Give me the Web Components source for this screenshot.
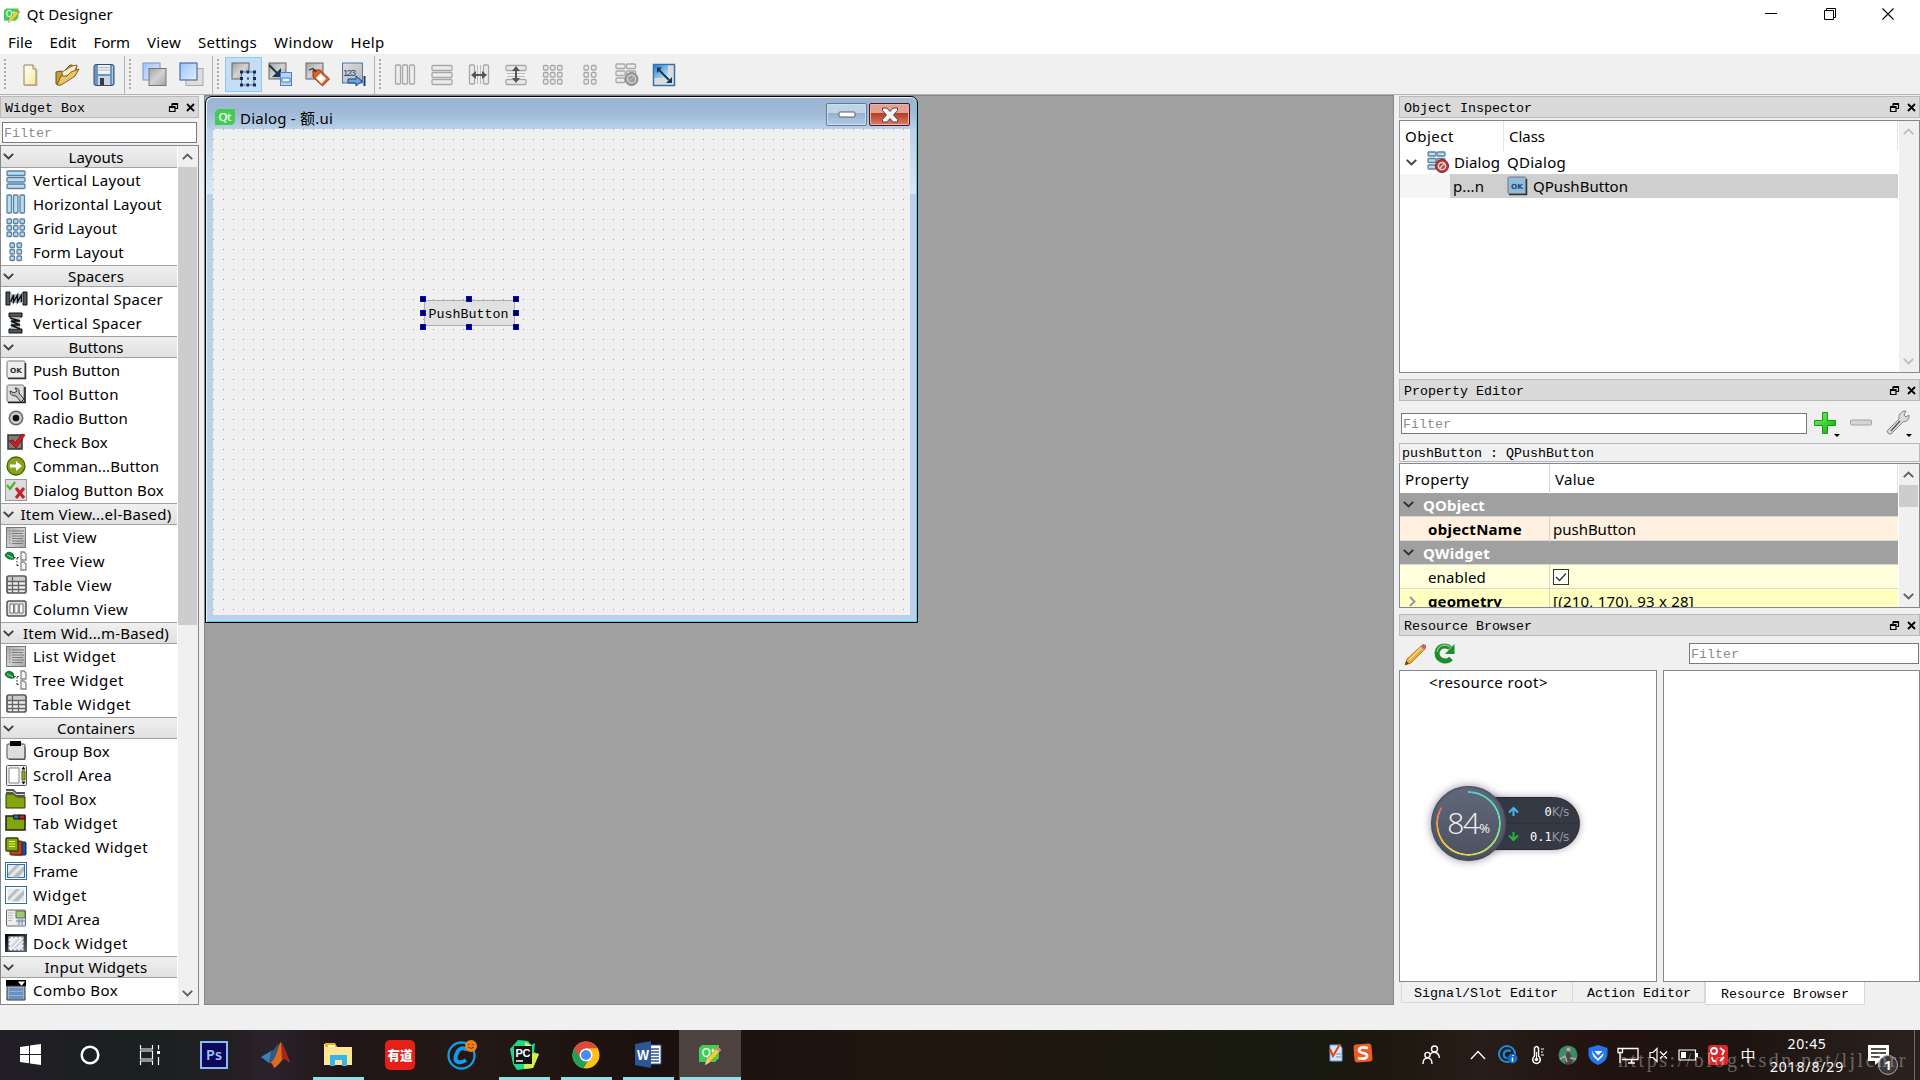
<!DOCTYPE html>
<html lang="en">
<head>
<meta charset="utf-8">
<title>Qt Designer</title>
<style>
  html, body { margin: 0; width: 1920px; height: 1080px; overflow: hidden; }
  body {
    font: 15px/20px "Noto Sans", "Noto Sans CJK SC", sans-serif;
    color: #000;
    background: #f0f0f0;
    --mono: 13.33px/20px "Liberation Mono", "Noto Sans CJK SC", monospace;
  }
</style>
</head>
<body>
<designer-app></designer-app>

<script>
const OK = (fill, ink) => `<rect x="1" y="1" width="18" height="17" rx="1.5" fill="${fill}" stroke="#777"/><path d="M2 18.5h17.5V3" fill="none" stroke="#333" stroke-width="1.5"/><text x="4" y="12.5" font-family="DejaVu Sans" font-size="7" font-weight="bold" fill="${ink}" textLength="12" lengthAdjust="spacingAndGlyphs">OK</text>`;
const cells = (xs, ys, w, h, fill, stroke) => xs.map(x => ys.map(y =>
  `<rect x="${x}" y="${y}" width="${w}" height="${h}" rx="1" fill="${fill}" stroke="${stroke}" stroke-width="1.3"/>`).join('')).join('');
const BLUE = ['#b5ddf3', '#5f7f9f'];
const GREY = ['#ececec', '#a8a8a8'];
const METAL = '<linearGradient id="m" x2="1" y2="1"><stop stop-color="#a2a2a2"/><stop offset=".5" stop-color="#d2d2d2"/><stop offset="1" stop-color="#a2a2a2"/></linearGradient>';
const SKY = '<linearGradient id="s" y2="1"><stop stop-color="#9dc2fa"/><stop offset="1" stop-color="#e3eefd"/></linearGradient>';
const STRIPES = (inner) => `<rect x=".5" y="1.5" width="21" height="17" fill="#fff" stroke="#2f6fb8"/><rect x="2.5" y="3.5" width="17" height="13" fill="#e8eaea" ${inner}/><path d="M3 12l8-8h4L3 16zM7 16.5L19 5v5l-6 6.500z" fill="#b9bcbe"/>`;
const listIcon = '<rect width="20" height="21" fill="url(#m)"/><rect x=".5" y=".5" width="19" height="20" fill="none" stroke="#777"/><path d="M3 4h1.500M3 7h1.500M3 10h1.500M3 13h1.500M3 16h1.500M6 4h12M6 6.500h11M6 9h12M6 11.500h11M6 14h12M6 16.500h11" stroke="#777"/>';
const treeIcon = '<path d="M0 4q3-5 8-1l1 5q-7 1-9-4z" fill="#178a35" stroke="#063"/><path d="M2 4l6 3" stroke="#9d9"/><path d="M9 6.500h6M12 7v9M12 14.500h3" stroke="#222" stroke-dasharray="1.500 1.500"/><path d="M16 1h3l2 2v6h-5zM16 11h3l2 2v6h-5z" fill="#f5f5f5" stroke="#888" stroke-width="1.300"/>';
const tableIcon = '<rect x="1" y="1" width="19" height="17" rx="2" fill="#eee" stroke="#555" stroke-width="1.700"/><path d="M2 3h17M2 5h17" stroke="#aaa"/><path d="M6.500 2v16M12.500 6v12M2 6.500h17M2 10.500h17M2 14.500h17" stroke="#666" stroke-width="1.300"/>';
const forbid = (c, d) => `<circle cx="15" cy="15" r="6.500" fill="${c}" stroke="${d}"/><circle cx="15" cy="15" r="3.600" fill="none" stroke="#ddd" stroke-width="1.500"/><path d="M12.500 17.500l5-5" stroke="#ddd" stroke-width="1.500"/>`;
const qtPencil = '<path d="M3 2h17v13l-4 4H0V5z" fill="#41cd52"/><text x="2.500" y="14" font-family="Noto Sans" font-size="13" font-weight="500" fill="#fff" textLength="14" lengthAdjust="spacingAndGlyphs">Qt</text><path d="M19 4l3 3L11 19l-5 3 2-6z" fill="#f6cf2c" stroke="#b08320" stroke-width=".6"/><path d="M19 4l3 3-2 2-3-3z" fill="#b78a85"/><path d="M8 16l3 3-5 3z" fill="#e8cfa5"/>';

// name: [width, height, markup]
const ICONS = {
  app: [22, 23, qtPencil],
  new: [22, 24, '<defs><linearGradient id="g" x2="1" y2="1"><stop stop-color="#fff"/><stop offset="1" stop-color="#f6ea93"/></linearGradient></defs><path d="M5 2h9l3 4v16H5z" fill="url(#g)" stroke="#8d8458"/><path d="M14 2v4h3" fill="#fff" stroke="#8d8458"/><path d="M18 7v15.500H6" fill="none" stroke="#999" opacity=".6"/>'],
  open: [26, 24, '<path d="M2 9l5-1 2 1 7-7 7 1-1 4L6 22l-4-1z" fill="#c79a35" stroke="#6f541a"/><path d="M8 9l10-6 5-1-2 6-12 7z" fill="#f8edc8" stroke="#8d6d25"/><path d="M3 22l4-9 6 0 4-4 8-3-4 7-9 6-5 3z" fill="#ecc465" stroke="#7f5e1d"/>'],
  save: [22, 24, '<rect x="1" y="1.500" width="20" height="21" rx="2" fill="#6f95bd" stroke="#36506f"/><rect x="5" y="2" width="12" height="9" fill="#eef1f3"/><path d="M5.500 4.500h11M5.500 7h11" stroke="#aeb9c3"/><path d="M5 13h12v9H5z" fill="#cfd5da"/><rect x="7" y="15" width="4" height="7" fill="#2b3f56"/><path d="M19.500 3v18" stroke="#a9cbe8"/>'],
  back: [26, 25, `<defs>${METAL}${SKY}</defs><rect x="1" y="1" width="17" height="17" fill="url(#s)" stroke="#7f93b5"/><rect x="7" y="6.500" width="17" height="17" fill="url(#m)" stroke="#777"/>`],
  front: [26, 25, `<defs>${METAL}${SKY}</defs><rect x="7" y="6.500" width="17" height="17" fill="#ddd" stroke="#aaa"/><rect x="1" y="1" width="17" height="17" fill="url(#s)" stroke="#2e5b9d"/>`],
  widgets: [26, 25, `<defs>${METAL}${SKY}</defs><rect x="2" y="1" width="17" height="16" fill="url(#m)" stroke="#666"/><rect x="11.500" y="10" width="12.500" height="13" fill="#c5dcfb" stroke="#3c72b7"/><path d="M10 8.500h3v3h-3zM16.500 8.500h2.500v3h-2.500zM23 8.500h3v3h-3zM10 15h3v3h-3zM23 15h3v3h-3zM10 21.500h3v3h-3zM16.500 21.500h2.500v3h-2.500zM23 21.500h3v3h-3z" fill="#1e2c4d"/><path d="M17 15.500h2v2h-2z" fill="#246"/>`],
  signals: [26, 25, `<defs>${METAL}</defs><rect x="2" y="1" width="17" height="16" fill="url(#m)" stroke="#666"/><path d="M2 3l8 8" stroke="#1c3450" stroke-width="2"/><path d="M14 6v9H5z" fill="#1c3450"/><rect x="13.500" y="10.500" width="11" height="13" fill="#b6d3fa" stroke="#4d81c0"/><path d="M15 16h8v4h-8z" fill="#e8f2ff" stroke="#4d81c0"/>`],
  buddies: [26, 25, `<defs>${METAL}</defs><rect x="2" y="1" width="17" height="16" fill="url(#m)" stroke="#666"/><path d="M9 8h7l9.500 9-7 7L9 15z" fill="#d9632c" stroke="#8d3512"/><path d="M16.500 11.500l5.500 5-4.500 5-5.500-5.500z" fill="#fff" stroke="#f2b08c"/><path d="M5 8l4-1.500 3 3.500" fill="none" stroke="#333" stroke-width="1.300"/>`],
  order: [26, 25, '<defs><linearGradient id="g" y2="1"><stop stop-color="#ddd"/><stop offset="1" stop-color="#b5b5b5"/></linearGradient></defs><rect x="1.500" y="1" width="20" height="20" fill="url(#g)" stroke="#4c79ac"/><text x="2" y="14" font-family="Liberation Sans" font-size="9.500" fill="#154477" textLength="13">123</text><path d="M7 17h8v-3l6 5-6 5v-3H7z" fill="#6aa5df" stroke="#154477"/><path d="M23.500 14v10" stroke="#154477" stroke-width="2"/>'],
  hlay: [22, 22, cells([1.5, 8.5, 15.5], [1], 5, 19, ...GREY)],
  vlay: [22, 22, cells([1], [1.5, 8.5, 15.5], 20, 5, ...GREY)],
  hsplit: [22, 22, cells([1.5, 15.5], [1], 5, 19, ...GREY) + '<path d="M9.500 1v19M12.500 1v19" stroke="#bbb"/><path d="M3 11l5-4v3h6V7l5 4-5 4v-3H8v3z" fill="#555"/>'],
  vsplit: [22, 22, cells([1], [1.5, 15.5], 20, 5, ...GREY) + '<path d="M2 9.500h18M2 12.500h18" stroke="#bbb"/><path d="M11 2l4 5h-3v7h3l-4 5-4-5h3V7H7z" fill="#555"/>'],
  grid: [22, 22, cells([1.5, 8.5, 15.5], [1.5, 8.5, 15.5], 4.500, 4.500, ...GREY)],
  form: [22, 22, cells([5, 12.5], [1.5, 8.5, 15.5], 4.500, 4.500, ...GREY)],
  unlay: [24, 24, cells([1, 11.5], [1, 8, 15], 9, 4.500, ...GREY) + '<circle cx="16.500" cy="16" r="6.500" fill="#999" stroke="#888"/><circle cx="16.500" cy="16" r="4" fill="none" stroke="#ccc" stroke-width="1.500"/><path d="M14 18.500l5-5" stroke="#ccc"/>'],
  adjust: [24, 24, '<defs><linearGradient id="a" x2="1" y2="1"><stop stop-color="#2f78c8"/><stop offset="1" stop-color="#c5ecfa"/></linearGradient></defs><rect x="1.500" y="1.500" width="21" height="21" fill="#dcdcdc" stroke="#3470ad" stroke-width="1.500"/><rect x="2" y="2" width="14" height="13" fill="url(#a)"/><path d="M7 7l10 10" stroke="#0c3b57" stroke-width="2"/><path d="M5 4.500h5L5 10zM20 20v-6l-6 6z" fill="#0c3b57"/>'],

  VerticalLayout: [20, 20, cells([1], [1, 7.5, 14], 18, 4.500, ...BLUE)],
  HorizontalLayout: [20, 20, cells([1, 7.5, 14], [1], 4.500, 18, ...BLUE)],
  GridLayout: [20, 20, cells([1, 7.5, 14], [1, 7.5, 14], 4.500, 4.500, ...BLUE)],
  FormLayout: [20, 20, cells([4, 11], [1, 7.5, 14], 4.500, 4.500, ...BLUE)],
  HorizontalSpacer: [21, 16, '<path d="M0 1h4v13H0zM17 1h4v13h-4z" fill="#555" stroke="#111"/><path d="M4 3h13v9H4z" fill="#abc"/><path d="M4.500 11l3-7v7l4-7v7l4-7v7" fill="none" stroke="#111" stroke-width="1.500"/>'],
  VerticalSpacer: [20, 20, '<path d="M3 0h13v4H3zM3 16h13v4H3z" fill="#555" stroke="#111"/><path d="M5 4h9v12H5z" fill="#abc"/><path d="M4 5l10 3H5l9 4H5l9 4" fill="none" stroke="#111" stroke-width="1.700"/>'],
  PushButton: [20, 20, OK('#eee', '#333')],
  ToolButton: [20, 20, '<rect x="1" y="1" width="17" height="17" rx="1.500" fill="#ddd" stroke="#777"/><path d="M2 18.500h17V3" fill="none" stroke="#222" stroke-width="1.700"/><path d="M9 4q5 0 4 5l5 6-3 3-5-6q-6 0-6-5l4 2 3-2z" fill="#c2c2c2" stroke="#333"/>'],
  RadioButton: [20, 20, '<circle cx="10" cy="10" r="6.700" fill="#ccc" stroke="#666" stroke-width="1.500"/><circle cx="10" cy="10" r="3.300" fill="#111"/>'],
  CheckBox: [20, 20, '<rect x="2" y="3" width="14" height="14" fill="#7b7b7b" stroke="#333" stroke-width="1.500"/><path d="M3 9l4-1 2 3 7-9 3 1-9 13z" fill="#d8191c" stroke="#7d0a0a" stroke-width=".8"/>'],
  CommandButton: [20, 20, '<circle cx="10" cy="10" r="9" fill="#87a616" stroke="#4c5e0b" stroke-width="1.300"/><path d="M4 8.500h6V5l6 5-6 5v-3.500H4z" fill="#fff"/>'],
  DialogButtonBox: [22, 22, '<rect x=".5" y=".5" width="21" height="21" fill="#dcdcdc" stroke="#999"/><path d="M2 6l3 4 5-7" fill="none" stroke="#4db52b" stroke-width="2.200"/><path d="M11 9l8 10M19 9l-8 10" stroke="#c22127" stroke-width="3"/>'],
  ListView: [20, 21, `<defs>${METAL}</defs>${listIcon}`],
  TreeView: [22, 20, treeIcon],
  TableView: [21, 20, tableIcon],
  ColumnView: [21, 18, '<rect x="1" y="1" width="19" height="15" rx="2" fill="#ddd" stroke="#555" stroke-width="1.500"/><path d="M4 4h3.500v9H4zM8.700 4h3.500v9H8.700zM13.400 4H17v9h-3.600z" fill="#fff" stroke="#777"/>'],
  GroupBox: [20, 20, '<rect x="1" y="3" width="18" height="15" rx="2" fill="#ddd" stroke="#777" stroke-width="1.300"/><path d="M3 18.500h16V6" fill="none" stroke="#555"/><path d="M4 0h11v5H4z" fill="#000"/>'],
  ScrollArea: [21, 21, '<rect x=".500" y=".500" width="20" height="20" rx="1" fill="#f0f0f0" stroke="#555"/><path d="M3 3h10v15H3z" fill="#fff" stroke="#888"/><path d="M16 6h3v9h-3z" fill="#89ad1e" stroke="#4f660d"/><path d="M17.500 1.500l2 3h-4zM17.500 19.500l2-3h-4z"/>'],
  ToolBox: [20, 20, '<path d="M0 5h8l3 3h8v11H0z" fill="#83a60c" stroke="#2c3805"/><path d="M0 1h7l3 3h9M0 4h7l3 3h9" fill="none" stroke="#555" stroke-width="2"/><path d="M0 2.500h7l3 3h9" stroke="#ddd" fill="none"/>'],
  TabWidget: [20, 16, '<path d="M0 1h19v14H0z" fill="#82a50b" stroke="#222" stroke-width="1.500"/><path d="M7 0h7v4H8z" fill="#2468c8" stroke="#111"/><path d="M13 0h6v4h-6z" fill="#c1262b" stroke="#111"/>'],
  StackedWidget: [22, 20, '<rect x="9" y="5" width="12" height="13" rx="1" fill="#1e4f9f" stroke="#092040"/><rect x="5" y="4" width="12" height="14" rx="1" fill="#b74614" stroke="#511"/><rect x="1" y="1" width="12" height="13" rx="1" fill="#86a90e" stroke="#34410a" stroke-width="1.500"/><path d="M4 4.500h6M4 7h6M4 9.500h6" stroke="#e6f35f"/>'],
  Frame: [22, 20, STRIPES('stroke="#2f6fb8"')],
  Widget: [22, 20, STRIPES('')],
  MDIArea: [22, 20, '<rect x="1.500" y="1" width="19" height="16" rx="1" fill="#eee" stroke="#666"/><path d="M11 2h9v7h-9z" fill="#9ccb6d" stroke="#666"/><path d="M3 4h6M3 6.500h5M3 9h5M3 11.500h4" stroke="#bbb"/><path d="M11 10h9v6h-9z" fill="#dce7ef"/><path d="M11 12h9M14 10v6M17 10v6" stroke="#58a"/>'],
  DockWidget: [22, 20, '<defs><linearGradient id="g" y2="1"><stop/><stop offset="1" stop-color="#666"/></linearGradient></defs><path d="M0 1h22v18H0z" fill="url(#g)"/><rect x="4" y="4" width="14" height="13" fill="#eee" stroke="#fff"/><rect x="4" y="4" width="14" height="13" fill="none" stroke="#337ac8" stroke-dasharray="2 2"/><path d="M6 14l8-8M10 15l7-7" stroke="#ccc" stroke-width="1.500"/>'],
  ComboBox: [20, 21, '<path d="M0 0h20v6H0z" fill="#000"/><path d="M12 1.500h7L15.500 6z" fill="#fff"/><path d="M1 6h18v14H1z" fill="#aab" stroke="#333"/><path d="M3 8h14v3H3zM3 12h14v3H3zM3 16h14v3H3z" fill="#5f94cf"/>'],

  dialog: [22, 22, cells([1, 10], [1, 7.5, 14], 8, 4, ...BLUE) + forbid('#bd3a36', '#7d2421')],
  okblue: [19, 20, OK('#90bcdf', '#234b70')],
  plus: [22, 22, '<defs><linearGradient id="g" x2="1" y2="1"><stop stop-color="#7cfb66"/><stop offset="1" stop-color="#06a808"/></linearGradient></defs><path d="M8.500.500h5v8h8v5h-8v8h-5v-8h-8v-5h8z" fill="url(#g)" stroke="#129c14"/>'],
  minus: [22, 8, '<rect x=".500" y="1" width="21" height="5" rx="1" fill="#d4d4d4" stroke="#a4a4a4"/>'],
  wrench: [24, 25, '<path d="M1 21L13 9q-1-6 5-8l2 0-2 4 2 2 3-2q1 6-6 7L5 24q-3 1-4-3z" fill="#d9d9d9" stroke="#888"/><path d="M5 21l9-10" stroke="#555" stroke-width="1.300"/>'],
  pencil: [23, 23, '<path d="M17 3l4 3L7 20l-6 2 2-6z" fill="#f0a935" stroke="#a66c1d" stroke-width=".8"/><path d="M5 17L18 4" stroke="#ffdc83" stroke-width="1.500"/><path d="M17 3l2-2 3 1v3l-2 2z" fill="#cf6350"/><path d="M1 22l1.300-4 2.700 2.700z" fill="#444"/><path d="M16 4l3.500 3" stroke="#bbb" stroke-width="1.500"/>'],
  reload: [21, 21, '<path d="M17 15.500q-3 3-7 2.500-7-2-7-8 1-7 8-7 3 0 5 2" fill="none" stroke="#1c8d2c" stroke-width="5"/><path d="M20.500 1v10H11z" fill="#1c8d2c"/><path d="M3 9q1-6 7-7 4 0 6 2" fill="none" stroke="#82cb83" stroke-width="1.300"/>'],
  float: [9, 9, '<path d="M3 .5h5.500v5H6.500M3 1.500h5.500M3 .5V3M.5 3.500H6v5H.5zM.5 4.500H6" fill="none" stroke="#000" stroke-width="1.200"/>'],
  close: [9, 9, '<path d="M1 1l7 7M8 1L1 8" stroke="#000" stroke-width="1.800"/>'],
  down: [11, 7, '<path d="M.8.900l4.700 4.500L10.200.900" fill="none" stroke="currentColor" stroke-width="2"/>'],
  up: [11, 7, '<path d="M.8 6.100l4.700-4.500 4.700 4.500" fill="none" stroke="currentColor" stroke-width="2"/>'],
  right: [7, 11, '<path d="M1 1l4.500 4.500L1 10" fill="none" stroke="#999" stroke-width="2"/>'],
  check: [16, 16, '<rect x=".500" y=".500" width="15" height="15" fill="#fff" stroke="#333"/><path d="M3 8l3.500 3.500L13 4.500" fill="none" stroke="#333" stroke-width="1.300"/>'],
  winmin: [12, 12, '<path d="M0 5.500h12" stroke="#000"/>'],
  winmax: [12, 12, '<path d="M.5 2.500h9v9h-9zM2.500 2V.500h9v9H10" fill="none" stroke="#000"/>'],
  winclose: [12, 12, '<path d="M.5.500l11 11M11.500.500l-11 11" stroke="#000" stroke-width="1.100"/>'],
  qt: [20, 16, '<path d="M3 0h17v13l-3 3H0V3z" fill="#41cd52"/><text x="3.500" y="11.500" font-family="Noto Sans" font-size="11.500" font-weight="500" fill="#fff" textLength="13">Qt</text>'],
  dlgmin: [18, 8, '<rect x="1" y="1" width="16" height="5" rx="1" fill="#fff" stroke="#555c6b"/>'],
  dlgclose: [18, 16, '<path d="M1.500 1H6l3 3.500L12 1h4.500v2.500L12.500 8l4 4.500V15H12l-3-3.500L6 15H1.500v-2.500l4-4.500-4-4.500z" fill="#f5f5f5" stroke="#5a4450"/>'],

  windows: [21, 21, '<path d="M0 3l9-1.300V10H0zM10 1.500L21 0v10H10zM0 11h9v8.300L0 18zM10 11h11v10l-11-1.500z" fill="#fff"/>'],
  cortana: [20, 20, '<circle cx="10" cy="10" r="8.300" fill="none" stroke="#fff" stroke-width="2.500"/>'],
  taskview: [22, 20, '<path d="M1.500 0v4h12V0M1.500 6h12v8h-12zM1.500 20v-4h12v4M19.500 0v4.500M19.500 12v8" fill="none" stroke="#fff" stroke-width="1.200"/><path d="M18 6h3v3h-3z" fill="#fff"/>'],
  ps: [28, 28, '<rect x="1" y="1" width="26" height="26" fill="#10065c" stroke="#86bdf3" stroke-width="2"/><text x="6" y="19" font-family="Noto Sans" font-size="15" font-weight="600" fill="#8fcaff" textLength="16" lengthAdjust="spacingAndGlyphs">Ps</text>'],
  matlab: [30, 28, '<path d="M0 16l10-6 5 7-7 5z" fill="#3e7fb4"/><path d="M10 10q4-1 7-8l-1 16-8 4z" fill="#315a83"/><path d="M8 22q5-1 8-11Q18 2 20 1q3 5 9 21-5-6-8-3-4 6-8 8-2-6-5-5z" fill="#dd6a1f"/><path d="M20 1q3 5 9 21-5-6-8-3z" fill="#a32618"/>'],
  folder: [28, 24, '<path d="M0 1h11l2 3h15v18H0z" fill="#ffe596"/><path d="M1 0h10l2 4H1z" fill="#f5b400"/><path d="M4 2h7v2H4z" fill="#fff"/><path d="M6 12h17v11h-5v-6h-7v6H6z" fill="#35b6ea"/>'],
  youdao: [30, 30, '<rect width="30" height="30" rx="5" fill="#e42119"/><text x="2.500" y="19.500" font-family="Noto Sans CJK SC" font-size="13" font-weight="900" fill="#fff" textLength="25" lengthAdjust="spacingAndGlyphs">有道</text>'],
  cclean: [31, 30, '<circle cx="14.500" cy="15.500" r="13" fill="none" stroke="#139bea" stroke-width="2.300"/><path d="M20 10q-5-4-9 1-5 9 0 11 4 1 8-2" fill="none" stroke="#139bea" stroke-width="4"/><circle cx="24" cy="6" r="6" fill="#ed7f19"/><path d="M21 4.500h1.500M25 4.500h1.500M21 7q3 3 6 0" fill="none" stroke="#7c3900"/>'],
  pycharm: [30, 30, '<path d="M1 9L9 0l10 1 3 4 4-2-1 9 5 2-6 14-16 2-4-6z" fill="#21d789"/><path d="M16 2l6 3v8l8 1-6 14-9 1z" fill="#d6f04a"/><path d="M5 6h18v18H5z" fill="#111"/><text x="6.500" y="16.500" font-family="Liberation Sans" font-weight="bold" font-size="11" fill="#fff" textLength="15">PC</text><path d="M7 21h7" stroke="#fff" stroke-width="1.500"/>'],
  chrome: [28, 28, '<circle cx="14" cy="14" r="13.500" fill="#fbc116"/><path d="M14 14L2.300 7.250a13.500 13.500 0 0 0 9.200 20.100L18 17z" fill="#22a05a"/><path d="M2.300 7.250a13.500 13.500 0 0 1 23.500 0H14L8 17z" fill="#dc4a3d"/><circle cx="14" cy="14" r="6.500" fill="#fff"/><circle cx="14" cy="14" r="5" fill="#4b8bf5"/>'],
  word: [27, 27, '<path d="M13 4h13v19H13z" fill="#fff" stroke="#2b5797"/><path d="M16 8h8M16 11h8M16 14h8M16 17h8M16 20h8" stroke="#2b5797" stroke-width="1.500"/><path d="M0 3l16-3v27L0 24z" fill="#2b5797"/><text x="2" y="19" font-family="Liberation Sans" font-weight="bold" font-size="14" fill="#fff" textLength="12" lengthAdjust="spacingAndGlyphs">W</text>'],
  note: [14, 18, '<path d="M1 1h10l2 3v13H1z" fill="#d4e6fb" stroke="#6f9cd1"/><path d="M7 10h5M7 13h5" stroke="#69a" /><path d="M1 5l3 7 7-12" fill="none" stroke="#e3431b" stroke-width="2"/>'],
  sogou: [20, 20, '<rect x="1" y="1" width="18" height="18" rx="3" fill="#f15a24" transform="rotate(-5 10 10)"/><path d="M15 5Q7 3 6 7q0 2 4 3 5 1 4 4-3 3-9 1" fill="none" stroke="#fff" stroke-width="2.600"/>'],
  people: [18, 20, '<g fill="none" stroke="#fff" stroke-width="1.400"><circle cx="12.500" cy="4" r="3"/><circle cx="5.500" cy="10" r="2.600"/><path d="M1 19q0-6 4.500-6t4.500 6M8.500 9Q10 7 13 7.500q4 .5 4.500 5.500"/></g>'],
  chevron: [16, 10, '<path d="M1 9l7-7.500L15 9" fill="none" stroke="#fff" stroke-width="1.300"/>'],
  cinfo: [20, 19, '<circle cx="9" cy="9" r="8" fill="none" stroke="#168ee0" stroke-width="2"/><path d="M13 6q-5-2-7 2-1 5 3 5" fill="none" stroke="#168ee0" stroke-width="2.300"/><circle cx="14.500" cy="13.500" r="5" fill="#1667c9"/><path d="M15 10v1M14.500 12.500v4" stroke="#fff" stroke-width="1.500"/>'],
  thermo: [14, 20, '<path d="M3.500 11V3q2-3 4 0v8q3 3 1 6-3 3-6 0-2-3 1-6z" fill="none" stroke="#fff" stroke-width="1.500"/><path d="M5.500 7v7" stroke="#fff"/><circle cx="5.500" cy="14.500" r="1.800" fill="#fff"/><path d="M10 4h3M10 7h2M10 10h3" stroke="#fff"/>'],
  avatar: [20, 20, '<circle cx="10" cy="10" r="9.500" fill="#3d8a67"/><path d="M7 19l1-9 2-5 3 5 2 9z" fill="#524348"/><circle cx="10.500" cy="4.500" r="2" fill="#cfa391"/><path d="M2 14l5-3 2 6M12 13l6 1" stroke="#a8b0a3" fill="none" stroke-width="1.500"/>'],
  shield: [20, 20, '<path d="M10 0l9.500 3v7q-1 7-9.500 10Q1.500 17 .5 10V3z" fill="#2377ed"/><path d="M4 6h12l-1 5-5 5-5-5z" fill="#fff"/><path d="M5 6l5 6 6-6" fill="none" stroke="#2377ed" stroke-width="2.200"/>'],
  monitor: [22, 18, '<path d="M5 2.500h16v11H5M11 17h7M14.500 14v3M1 2.500h4.500v4H1zM3 7v10" fill="none" stroke="#fff" stroke-width="1.300"/>'],
  mute: [19, 16, '<path d="M1 5.500h3l4-4v13l-4-4H1zM11 4.500l7 7M18 4.500l-7 7" fill="none" stroke="#fff" stroke-width="1.200"/>'],
  battery: [20, 12, '<path d="M1 1h16.500v10H1z" fill="none" stroke="#fff" stroke-width="1.200"/><path d="M3 3h5v6H3zM18 4h2v4h-2z" fill="#fff"/>'],
  redapp: [20, 20, '<rect width="20" height="20" rx="3" fill="#de2626"/><g fill="none" stroke="#fff" stroke-width="1.800"><circle cx="6" cy="6" r="3"/><path d="M12 3l4 3-2 4M4 12q0 5 4 4M12 16l4-4"/></g>'],
  action: [22, 20, '<path d="M0 0h21v16h-9l-5 4v-4H0z" fill="#fff"/><path d="M3 4h15M3 8h15M3 12h9" stroke="#201615" stroke-width="1.500"/>'],
  up2: [11, 9, '<path d="M5.500 9V2M1 5.500L5.500 1 10 5.500" fill="none" stroke="#45b8ef" stroke-width="2"/>'],
  down2: [11, 9, '<path d="M5.500 0v7M1 3.500L5.500 8 10 3.500" fill="none" stroke="#28b53a" stroke-width="2"/>'],
};

class UiIcon extends HTMLElement {
  constructor() {
    super();
    this.attachShadow({ mode: 'open' });
  }

  connectedCallback() {
    const [w, h, body] = ICONS[this.getAttribute('name')];
    this.shadowRoot.innerHTML = `
      <style>
        :host { display: inline-block; flex: none; line-height: 0; }
        svg { display: block; overflow: visible; }
      </style>
      <svg width="${w}" height="${h}" viewBox="0 0 ${w} ${h}">${body}</svg>`;
  }
}
customElements.define('ui-icon', UiIcon);

// Text label that tracks its letters so that it takes exactly `w` pixels.
class FitText extends HTMLElement {
  constructor() {
    super();
    this.attachShadow({ mode: 'open' }).innerHTML = `
      <style>
        :host { display: inline-block; flex: none; white-space: nowrap; }
        span { display: inline-block; }
      </style>
      <span><slot></slot></span>`;
  }

  fit() {
    const w = Number(this.getAttribute('w'));
    if (!w) return;
    const span = this.shadowRoot.querySelector('span');
    const natural = span.getBoundingClientRect().width;
    span.style.letterSpacing = `${(w - natural) / this.textContent.length}px`;
    this.style.width = `${w}px`;
  }
}
customElements.define('fit-text', FitText);

// Small helper for the plain elements below: one shadow root from one string.
function define(name, html) {
  customElements.define(name, class extends HTMLElement {
    constructor() {
      super();
      this.attachShadow({ mode: 'open' });
    }

    connectedCallback() {
      this.shadowRoot.innerHTML = typeof html === 'function' ? html(this) : html;
      this.shadowRoot.querySelectorAll('fit-text').forEach(t => t.fit());
    }
  });
}

define('title-bar', `
  <style>
    :host { display: flex; height: 30px; background: #fff; align-items: center; padding: 0 26px 0 4px; }
    .t { margin: 0 auto 0 7px; padding-bottom: 2px; }
    .b { display: flex; gap: 46.500px; padding-bottom: 2px; }
    .app { zoom: .72; }
  </style>
  <ui-icon class="app" name="app"></ui-icon><fit-text class="t" w="86">Qt Designer</fit-text>
  <div class="b"><ui-icon name="winmin"></ui-icon><ui-icon name="winmax"></ui-icon><ui-icon name="winclose"></ui-icon></div>`);

define('menu-bar', `
  <style>
    :host { display: flex; height: 24px; background: #fff; gap: 17px; padding-left: 8px; align-items: center; border-bottom: 1px solid #ececec; line-height: 22px; }
  </style>
  ${[['File', 24.5], ['Edit', 27], ['Form', 36.5], ['View', 34], ['Settings', 59], ['Window', 59.5], ['Help', 34]]
    .map(([t, w]) => `<fit-text w="${w}">${t}</fit-text>`).join('')}`);

define('tool-group', el => `
  <style>
    :host { display: flex; height: 38px; padding: 0 1px 0 3px; margin-right: 1px; border-right: 1px solid #b4b4b4; }
    .grip { width: 2px; height: 31px; margin: 3px 6px 0 0; background: repeating-linear-gradient(#aaa 0 2px, transparent 2px 4px); }
    .btn { width: 37px; height: 35px; margin-top: 1px; box-sizing: border-box; display: grid; place-items: center; }
    .btn ui-icon { margin-left: -1px; }
    .btn.on { background: #c3def5; border: 1px solid #90c8f6; }
  </style>
  <div class="grip"></div>
  ${el.getAttribute('icons').split(' ').map(n => `<div class="btn${n === 'widgets' ? ' on' : ''}"><ui-icon name="${n}"></ui-icon></div>`).join('')}`);

define('tool-bar', `
  <style>
    :host { display: flex; height: 38px; margin-top: 1px; padding-left: 1px; border-bottom: 1px solid #b4b4b4; background: #f0f0f0; }
    .last { border: 0; }
  </style>
  <tool-group icons="new open save"></tool-group>
  <tool-group icons="back front"></tool-group>
  <tool-group icons="widgets signals buddies order"></tool-group>
  <tool-group class="last" icons="hlay vlay hsplit vsplit grid form unlay adjust"></tool-group>`);

// Dock with a grey caption; its content is slotted.
define('dock-panel', el => `
  <style>
    :host { display: flex; flex-direction: column; min-height: 0; }
    header { height: 22px; box-sizing: border-box; flex: none; display: flex; align-items: center; gap: 8px;
      border: 1px solid #b9b9b9; background: #dadada; padding: 1px 3px 0 4px; font: var(--mono); }
    .t { margin-right: auto; padding-top: 2px; }
  </style>
  <header><fit-text class="t" w="${el.getAttribute('caption').length * 8}">${el.getAttribute('caption')}</fit-text>
  <ui-icon name="float"></ui-icon><ui-icon name="close"></ui-icon></header>
  <slot></slot>`);

define('filter-box', `
  <style>
    :host { display: block; flex: none; height: 21px; box-sizing: border-box; border: 1px solid #7a7a7a; background: #fff; font: var(--mono); line-height: 22px; color: #8c8c8c; padding-left: 1px; overflow: hidden; }
  </style>
  <fit-text w="48">Filter</fit-text>`);

define('scroll-bar', el => `
  <style>
    :host { display: flex; flex: none; flex-direction: column; width: 20px; background: #f0f0f0; align-items: center; color: ${el.hasAttribute('disabled') ? '#bfbfbf' : '#606060'}; box-sizing: border-box; padding-right: 1px; }
    .a { height: 21px; display: grid; place-items: center; }
    .thumb { width: 19px; background: #cdcdcd; height: ${el.getAttribute('thumb') || 0}px; }
    .gap { flex: 1; }
  </style>
  <div class="a"><ui-icon name="up"></ui-icon></div><div class="thumb"></div><div class="gap"></div><div class="a"><ui-icon name="down"></ui-icon></div>`);

const CATEGORIES = [
  ['Layouts', 55, [['Vertical Layout', 108], ['Horizontal Layout', 129], ['Grid Layout', 84], ['Form Layout', 91]]],
  ['Spacers', 56, [['Horizontal Spacer', 130], ['Vertical Spacer', 109]]],
  ['Buttons', 55, [['Push Button', 87], ['Tool Button', 86], ['Radio Button', 95], ['Check Box', 75], ['Comman...Button', 126, 'CommandButton'], ['Dialog Button Box', 131]]],
  ['Item View...el-Based)', 151, [['List View', 64], ['Tree View', 72], ['Table View', 79], ['Column View', 95]]],
  ['Item Wid...m-Based)', 146, [['List Widget', 83, 'ListView'], ['Tree Widget', 91, 'TreeView'], ['Table Widget', 98, 'TableView']]],
  ['Containers', 78, [['Group Box', 77], ['Scroll Area', 79], ['Tool Box', 64], ['Tab Widget', 85], ['Stacked Widget', 115], ['Frame', 45], ['Widget', 54], ['MDI Area', 67], ['Dock Widget', 95]]],
  ['Input Widgets', 103, [['Combo Box', 85]]],
];

define('widget-box', `
  <style>
    :host { display: flex; flex-direction: column; width: 199px; }
    filter-box { margin: 4px 2px 2px; }
    .tree { display: flex; flex: 1; min-height: 0; border: 1px solid #828790; background: #fff; }
    .list { flex: 1; overflow: hidden; margin-right: 1px; }
    .cat { height: 22px; margin-top: 1px; box-sizing: border-box; display: flex; align-items: center; padding-left: 2px;
      border: solid #a0a0a0; border-width: 1px 0; background: linear-gradient(#f0f0f0, #e0e0e0); color: #404040; }
    .cat:first-child { margin-top: 0; border-top: 0; }
    .cat div { flex: 1; text-align: center; color: #000; padding: 0 0 0 1px; }
    .row { height: 24px; display: flex; align-items: center; }
    .row .i { width: 22px; margin: 0 6px 0 4px; display: grid; place-items: center; }
    .row fit-text { padding-bottom: 1px; }
  </style>
  <dock-panel caption="Widget Box"></dock-panel>
  <filter-box></filter-box>
  <div class="tree">
    <div class="list">${CATEGORIES.map(([name, w, items]) => `
      <div class="cat"><ui-icon name="down"></ui-icon><div><fit-text w="${w}">${name}</fit-text></div></div>
      ${items.map(([t, tw, icon]) => `<div class="row"><div class="i"><ui-icon name="${icon || t.replace(/ /g, '')}"></ui-icon></div><fit-text w="${tw}">${t}</fit-text></div>`).join('')}`).join('')}
    </div>
    <scroll-bar thumb="458"></scroll-bar>
  </div>`);

define('dialog-window', `
  <style>
    :host { position: absolute; left: 0; top: 0; width: 713px; height: 527px; box-sizing: border-box;
      border: 1px solid #000; border-radius: 7px 7px 0 0; background: #b9d1ea; box-shadow: inset 1px 1px #eef4fb, inset -1px -1px #52d0ea;
      display: flex; flex-direction: column; overflow: hidden; }
    header { height: 31px; flex: none; margin: 1px 1px 0; padding: 0 6px 0 8px; display: flex; align-items: flex-start; background: linear-gradient(#9ab4d1, #a0bad7 50%, #b9d1ea); border-radius: 6px 6px 0 0; }
    header .q { margin-top: 11px; }
    header .t { margin: 10px auto 0 5px; }
    .b { width: 41px; height: 23px; box-sizing: border-box; border: 1px solid #62799a; border-radius: 2px; margin-top: 5px; display: grid; place-items: center;
      background: linear-gradient(#bfd3e9 45%, #96b0cd 45%, #b4cde6); box-shadow: inset 0 0 0 1px #cfdeee; }
    .c { margin-left: 2px; border-color: #4c1420; background: linear-gradient(#e3a296 45%, #b73d24 45%, #d67f6b); box-shadow: inset 0 0 0 1px #e9b4a8; }
    .b ui-icon { padding-top: 1px; }
    .mid { flex: 1; display: flex; margin: 0 1px 7px; min-height: 0; }
    .side { width: 6px; height: 65px; background: linear-gradient(#b9d1ea, #dbe8f6); }
    .side.r { width: 6px; }
    .form { flex: 1; position: relative; background: #f0f0f0; }
    .form svg { display: block; width: 100%; height: 100%; }
    .push { position: absolute; left: 211px; top: 171px; width: 91px; height: 26px; box-sizing: border-box; border: 1px solid #adadad; background: #e1e1e1; display: grid; place-items: center; font: var(--mono); padding: 3px 2px 0 0; }
    .h { position: absolute; width: 6px; height: 6px; box-sizing: border-box; border: 1px solid #00f; background: #000; }
  </style>
  <header><ui-icon class="q" name="qt"></ui-icon><fit-text class="t" w="93">Dialog - 额.ui</fit-text>
    <div class="b"><ui-icon name="dlgmin"></ui-icon></div><div class="b c"><ui-icon name="dlgclose"></ui-icon></div></header>
  <div class="mid">
    <div class="side"></div>
    <div class="form">
      <svg shape-rendering="crispEdges"><defs><pattern id="dots" width="10" height="10" patternUnits="userSpaceOnUse"><rect width="1" height="1" fill="#9c9c9c"/></pattern></defs><rect width="100%" height="100%" fill="url(#dots)"/></svg>
      <div class="push"><fit-text w="80">PushButton</fit-text></div>
      ${[[207, 167], [253, 167], [300, 167], [207, 181], [300, 181], [207, 195], [253, 195], [300, 195]]
        .map(([x, y]) => `<div class="h" style="left:${x}px;top:${y}px"></div>`).join('')}
    </div>
    <div class="side r"></div>
  </div>`);

define('mdi-area', `
  <style>
    :host { display: block; position: relative; flex: none; width: 1188px; margin-left: 5px; background: #a0a0a0; border: 1px solid #828790; }
  </style>
  <dialog-window></dialog-window>`);

define('object-inspector', `
  <style>
    :host { display: block; height: 277px; }
    .tree { display: flex; height: 251px; margin-top: 2px; border: 1px solid #828790; background: #fff; }
    .rows { flex: 1; margin-right: 1px; }
    .head { height: 29px; display: grid; grid-template-columns: 104px 1fr; box-sizing: border-box; border-right: 1px solid #e5e5e5; line-height: 30px; }
    .head span { border-right: 1px solid #e5e5e5; padding-left: 5px; }
    .head span + span { border: 0; }
    .row { height: 24px; display: grid; grid-template-columns: 103px 1fr; align-items: center; line-height: 25px; }
    .row > div { display: flex; align-items: center; height: 24px; }
    .a ui-icon:first-child { margin: 0 10px 0 6px; color: #404040; }
    .a fit-text { margin-left: 5px; }
    .sel { background: linear-gradient(90deg, #f5f5f5 50px, #cfcfcf 50px); }
  </style>
  <dock-panel caption="Object Inspector"></dock-panel>
  <div class="tree">
    <div class="rows">
      <div class="head"><span><fit-text w="49">Object</fit-text></span><span><fit-text w="36">Class</fit-text></span></div>
      <div class="row"><div class="a"><ui-icon name="down"></ui-icon><ui-icon name="dialog"></ui-icon><fit-text w="46">Dialog</fit-text></div><div style="padding-left:4px"><fit-text w="59">QDialog</fit-text></div></div>
      <div class="row sel"><div style="padding-left:53px"><fit-text w="31">p...n</fit-text></div><div style="padding-left:4px"><ui-icon name="okblue"></ui-icon><fit-text style="margin-left:7px" w="95">QPushButton</fit-text></div></div>
    </div>
    <scroll-bar disabled></scroll-bar>
  </div>`);

define('property-editor', `
  <style>
    :host { display: block; height: 229px; margin-top: 6px; }
    .bar { display: flex; height: 42px; align-items: center; padding-left: 2px; }
    .bar filter-box { width: 406px; margin: 2px 7px 0 0; }
    .bar ui-icon { margin-top: 1px; }
    .drop { width: 0; border: 3.5px solid transparent; border-top-color: #000; border-bottom: 0; align-self: flex-end; margin: 0 0 6px -2px; }
    .bar .m { margin-left: 10px; }
    .bar .w { margin-left: 14px; }
    .bar .w + .drop { margin-left: -4px; }
    .obj { height: 19px; box-sizing: border-box; border: 1px solid #b9b9b9; font: var(--mono); padding-left: 2px; line-height: 19px; }
    .tree { display: flex; height: 143px; margin-top: 1px; border: 1px solid #828790; background: #fff; overflow: hidden; }
    .rows { flex: 1; overflow: hidden; margin-right: 1px; }
    .row, .head { display: grid; grid-template-columns: 150px 1fr; height: 24px; box-sizing: border-box; border-bottom: 1px solid #d8d8d8; line-height: 25px; }
    .head { height: 29px; border: 0; line-height: 30px; border-right: 1px solid #e5e5e5; }
    .row > div, .head > div { box-sizing: border-box; height: 100%; }
    .row > div:first-child, .head > div:first-child { border-right: 1px solid #d5d5d5; }
    .k { padding-left: 28px; }
    .v { padding-left: 3px; }
    .rows .g { display: flex; align-items: center; background: #a0a0a0; color: #303030; padding-left: 3px; }
    .g fit-text { color: #fff; font-weight: bold; margin-left: 9px; padding-top: 1px; }
    .b { font-weight: bold; }
    .v ui-icon { margin-top: 4px; }
    .exp { display: flex; align-items: center; padding-left: 9px; gap: 12px; }
  </style>
  <dock-panel caption="Property Editor"></dock-panel>
  <div class="bar"><filter-box></filter-box><ui-icon name="plus"></ui-icon><i class="drop"></i><ui-icon class="m" name="minus"></ui-icon><ui-icon class="w" name="wrench"></ui-icon><i class="drop"></i></div>
  <div class="obj"><fit-text w="192">pushButton : QPushButton</fit-text></div>
  <div class="tree">
    <div class="rows">
      <div class="head"><div style="padding-left:5px"><fit-text w="64">Property</fit-text></div><div style="padding-left:5px"><fit-text w="40">Value</fit-text></div></div>
      <div class="row g"><ui-icon name="down"></ui-icon><fit-text w="62">QObject</fit-text></div>
      <div class="row" style="background:#fff0e0"><div class="k b"><fit-text w="94">objectName</fit-text></div><div class="v"><fit-text w="83">pushButton</fit-text></div></div>
      <div class="row g"><ui-icon name="down"></ui-icon><fit-text w="67">QWidget</fit-text></div>
      <div class="row" style="background:#ffffdc"><div class="k"><fit-text w="58">enabled</fit-text></div><div class="v"><ui-icon name="check"></ui-icon></div></div>
      <div class="row" style="background:#ffffbf"><div class="exp b"><ui-icon name="right"></ui-icon><fit-text w="74">geometry</fit-text></div><div class="v"><fit-text w="141">[(210, 170), 93 x 28]</fit-text></div></div>
    </div>
    <scroll-bar thumb="22"></scroll-bar>
  </div>`);

define('speed-gauge', `
  <style>
    :host { position: absolute; left: 1431px; top: 786px; width: 150px; height: 75px; }
    .pill { position: absolute; left: 38px; top: 11px; width: 111px; height: 53px; box-sizing: border-box; border-radius: 0 27px 27px 0; background: linear-gradient(#343944 49%, #272b34 49%, #343944 51%); border: 1px solid #25282f;
      box-shadow: 0 0 7px rgba(60,40,80,.45); display: grid; grid-template-rows: 1fr 1fr; padding: 1px 10px 0 38px; }
    .r { display: flex; align-items: center; color: #fff; font: 12px "DejaVu Sans Mono", monospace; }
    .r span { margin-left: auto; }
    .r small { font: 12px "DejaVu Sans", sans-serif; color: #9295a0; letter-spacing: -.3px; }
    .disc { position: absolute; left: 0; top: 0; width: 75px; height: 75px; border-radius: 50%; background: linear-gradient(#60687a, #4c515e); box-shadow: 0 0 8px rgba(60,40,80,.55), inset 0 0 2px 1px #454a57; display: flex; align-items: center; justify-content: center; color: #f4f4f6; font: 300 30px "Open Sans", sans-serif; box-sizing: border-box; padding-bottom: 3px; }
    .ring { position: absolute; inset: 5px; border-radius: 50%; background: conic-gradient(#42d3cc, #6ee0a5 25%, #d5df4e 48%, #f0d14c 60%, #f0a544 73%, #f06a67 83%, transparent 84%); -webkit-mask: radial-gradient(closest-side, transparent 92.500%, #000 94.500%); mask: radial-gradient(closest-side, transparent 92.500%, #000 94.500%); }
    .disc small { font-size: 13px; padding-top: 12px; font-weight: 400; }
  </style>
  <div class="pill">
    <div class="r"><ui-icon name="up2"></ui-icon><span>0</span><small>K/s</small></div>
    <div class="r"><ui-icon name="down2"></ui-icon><span>0.1</span><small>K/s</small></div>
  </div>
  <div class="disc"><div class="ring"></div><fit-text w="32">84</fit-text><small>%</small></div>`);

define('resource-browser', `
  <style>
    :host { display: flex; flex-direction: column; flex: 1; margin-top: 6px; }
    .bar { display: flex; height: 34px; box-sizing: border-box; padding: 7px 1px 0 5px; gap: 7px; }
    .bar filter-box { width: 230px; margin-left: auto; }
    .panes { display: flex; height: 312px; gap: 6px; }
    .panes > div { flex: 1; box-sizing: border-box; border: 1px solid #828790; background: #fff; padding: 0 0 0 29px; line-height: 22px; }
    .tabs { display: flex; align-items: flex-start; padding-left: 2px; font: var(--mono); }
    .tabs div { box-sizing: border-box; height: 21px; border: 1px solid #d9d9d9; border-top: 0; padding-left: 12px; line-height: 24px; }
    .tabs .on { height: 23px; background: #fff; line-height: 26px; padding-left: 15px; }
  </style>
  <dock-panel caption="Resource Browser"></dock-panel>
  <div class="bar"><ui-icon name="pencil"></ui-icon><ui-icon name="reload"></ui-icon><filter-box></filter-box></div>
  <div class="panes"><div><fit-text w="119">&lt;resource root&gt;</fit-text></div><div></div></div>
  <div class="tabs"><div style="width:172px"><fit-text w="144">Signal/Slot Editor</fit-text></div><div style="width:132px;border-left:0;padding-left:14px"><fit-text w="104">Action Editor</fit-text></div><div class="on" style="width:160px"><fit-text w="128">Resource Browser</fit-text></div></div>`);

define('task-bar', `
  <style>
    :host { display: flex; height: 50px; position: relative; color: #fff;
      background: linear-gradient(90deg, #221e26 0, #1a2020 140px, #231f22 230px, #2b232c 270px, #201618 340px, #241814 480px, #1b100d 650px, #20150f 900px, #171a10 1300px, #1c170f 1380px, #281d18 1480px, #20120f 1620px, #1d1411 1740px, #2a201d 1900px); }
    .c { display: grid; place-items: center; width: 60px; box-sizing: border-box; flex: none; padding-bottom: 1px; }
    .apps { display: flex; margin-left: 3px; }
    .apps .c { width: 62px; }
    .run { background: linear-gradient(#8be2e8, #8be2e8) center bottom / 51px 3px no-repeat; }
    .act { background: linear-gradient(#8be2e8, #8be2e8) center bottom / 61px 3px no-repeat, #4d4240; }
    .tray { display: flex; margin-left: auto; }
    .tray .c { width: 30px; }
    .clock { width: 88px; display: flex; flex-direction: column; align-items: center; padding-top: 2px; line-height: 23px; font-size: 14px; }
    .note { position: relative; width: 64px; display: flex; padding: 15px 0 0 17px; box-sizing: border-box; border-right: 1px solid #746a67; margin-right: 5px; }
    .badge { position: absolute; left: 27px; top: 25px; width: 20px; height: 20px; border-radius: 50%; box-sizing: border-box; border: 1px solid #aaa; background: #40393a; text-align: center; line-height: 18px; font-size: 13px; font-weight: bold; }
    .mark { position: absolute; left: 1618px; top: 15px; font: 300 20px/30px "Liberation Serif", serif; color: rgba(255,255,255,.34); }
  </style>
  ${['windows', 'cortana', 'taskview'].map(n => `<div class="c"><ui-icon name="${n}"></ui-icon></div>`).join('')}
  <div class="apps">${['ps', 'matlab', 'folder run', 'youdao', 'cclean', 'pycharm run', 'chrome run', 'word run', 'app act']
    .map(s => { const [n, c] = s.split(' '); return `<div class="c ${c || ''}"><ui-icon name="${n}"></ui-icon></div>`; }).join('')}</div>
  <div class="tray">
    <div class="c" style="width:26px;padding-bottom:5px"><ui-icon name="note"></ui-icon></div>
    <div class="c" style="width:28px;padding-bottom:5px"><ui-icon name="sogou"></ui-icon></div>
    <div class="c" style="width:54px;margin:0 5px 0 27px"><ui-icon name="people"></ui-icon></div>
    ${['chevron', 'cinfo', 'thermo', 'avatar', 'shield', 'monitor', 'mute', 'battery', 'redapp'].map(n => `<div class="c"><ui-icon name="${n}"></ui-icon></div>`).join('')}
    <div class="c"><span>中</span></div>
    <div class="clock"><fit-text w="39">20:45</fit-text><fit-text w="74">2018/8/29</fit-text></div>
    <div class="note"><ui-icon name="action"></ui-icon><div class="badge">1</div></div>
  </div>
  <fit-text class="mark" w="290">https://blog.csdn.net/ljlchrr</fit-text>`);

define('designer-app', `
  <style>
    :host { display: flex; flex-direction: column; width: 1920px; height: 1080px; position: relative; }
    main { display: flex; height: 910px; }
    widget-box { margin-top: 1px; }
    .right { width: 521px; margin: 1px 0 0 auto; display: flex; flex-direction: column; }
    task-bar { margin-top: auto; }
  </style>
  <title-bar></title-bar>
  <menu-bar></menu-bar>
  <tool-bar></tool-bar>
  <main>
    <widget-box></widget-box>
    <mdi-area></mdi-area>
    <div class="right">
      <object-inspector></object-inspector>
      <property-editor></property-editor>
      <resource-browser></resource-browser>
    </div>
  </main>
  <task-bar></task-bar>
  <speed-gauge></speed-gauge>`);
</script>
</body>
</html>
